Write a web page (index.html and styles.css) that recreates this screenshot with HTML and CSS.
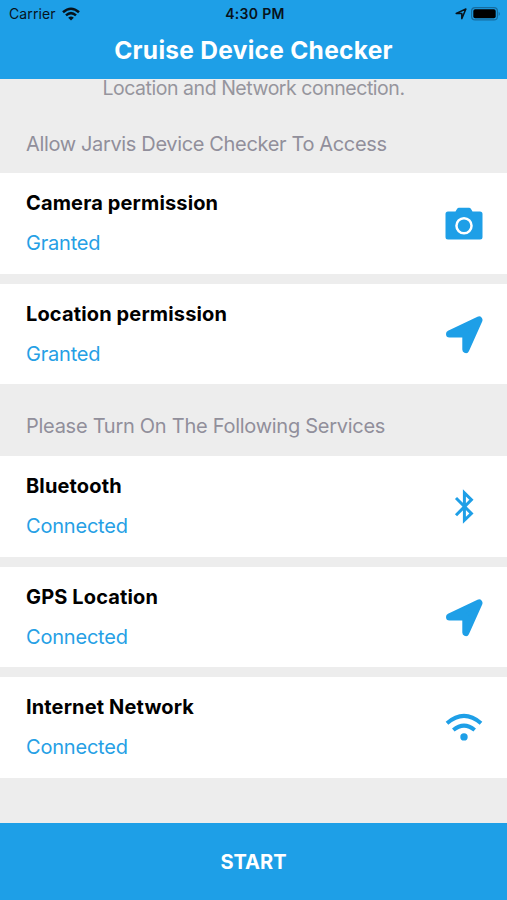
FILE: index.html
```html
<!DOCTYPE html>
<html lang="en">
<head>
<meta charset="utf-8">
<title>Cruise Device Checker</title>
<link rel="stylesheet" href="styles.css">
</head>
<body>
<svg class="defs" width="0" height="0" aria-hidden="true">
  <symbol id="arrow" viewBox="0 0 38 38"><path d="M34 4L20.800 33.500V18H4.500Z" fill="currentColor" stroke="currentColor" stroke-width="7" stroke-linejoin="round"/></symbol>
</svg>
<header class="header">
  <div class="status-bar">
    <div class="carrier"><span class="carrier-name">Carrier</span>
      <svg width="18" height="14" viewBox="0 0 18 14" fill="none" stroke="#07131b" stroke-width="2.500"><path d="M1 5.300Q9-1.900 17 5.300M4 8.400Q9 3.900 14 8.400"/><path d="M6.200 10.700Q9 8.300 11.800 10.700L9 13.500Z" fill="#07131b" stroke="none"/></svg>
    </div>
    <div class="clock">4:30 PM</div>
    <div class="indicators">
      <svg width="12" height="12" viewBox="0 0 12 12" fill="none" stroke="#07131b" stroke-width="1.500" stroke-linejoin="round"><path d="M10.900 1L6.800 10.600V5.400H1.200Z"/></svg>
      <svg width="30" height="14" viewBox="0 0 30 14"><rect x=".6" y=".6" width="25.800" height="12.300" rx="3.500" fill="none" stroke="#166c9f" stroke-width="1.200"/><rect x="2.300" y="2.300" width="22.400" height="8.900" rx="1.800" fill="#000"/><path d="M27.700 4.700Q30 6.800 27.700 9Z" fill="#166c9f"/></svg>
    </div>
  </div>
  <h1 class="title"><span>Cruise Device Checker</span></h1>
</header>
<main class="content">
  <p class="intro"><span>Location and Network connection.</span></p>
  <h2 class="section-title access"><span>Allow Jarvis Device Checker To Access</span></h2>
  <div class="list">
    <div class="row"><div><div class="name">Camera permission</div><div class="state">Granted</div></div>
      <svg class="icon" viewBox="0 0 38 38"><path fill="currentColor" fill-rule="evenodd" d="M3 6.500H10.500L12 4Q12.700 2.800 14 2.800H24Q25.300 2.800 26 4L27.500 6.500H35Q37.500 6.500 37.500 9V32Q37.500 34.500 35 34.500H3Q.5 34.500 .5 32V9Q.5 6.500 3 6.500ZM19 12A8.800 8.800 0 1 0 19 29.600A8.800 8.800 0 1 0 19 12ZM19 14.500A6.300 6.300 0 1 1 19 27.100A6.300 6.300 0 1 1 19 14.500Z"/></svg></div>
    <div class="row"><div><div class="name">Location permission</div><div class="state">Granted</div></div><svg class="icon"><use href="#arrow"/></svg></div>
  </div>
  <h2 class="section-title services"><span>Please Turn On The Following Services</span></h2>
  <div class="list">
    <div class="row"><div><div class="name">Bluetooth</div><div class="state">Connected</div></div>
      <svg class="icon" viewBox="0 0 38 38" fill="none" stroke="currentColor" stroke-width="3"><path d="M11 10L26.400 25.500L19.400 32.300V4.900L26.400 11.700L11 27.200"/></svg></div>
    <div class="row"><div><div class="name">GPS Location</div><div class="state">Connected</div></div><svg class="icon"><use href="#arrow"/></svg></div>
    <div class="row"><div><div class="name">Internet Network</div><div class="state">Connected</div></div>
      <svg class="icon" viewBox="0 0 38 38" fill="none" stroke="currentColor" stroke-width="4"><path d="M2 14.300Q19-.4 36 14.300M8.300 21Q19 12.200 29.700 21"/><circle cx="19" cy="27.900" r="3.700" fill="currentColor" stroke="none"/></svg></div>
  </div>
</main>
<button class="start"><span>START</span></button>
</body>
</html>
```
FILE: styles.css
```css
* { box-sizing: border-box; }
body { margin: 0; width: 507px; height: 900px; overflow: hidden; display: flex; flex-direction: column; background: #ededed; font-family: Inter, "Liberation Sans", sans-serif; color: #000; }
.defs { position: absolute; }
.header { height: 79px; flex: none; background: #1e9fe7; }
.status-bar { height: 27px; padding: 0 6px 0 9px; display: grid; grid-template-columns: 1fr auto 1fr; align-items: center; color: #07131b; font-size: 14px; line-height: 27px; }
.carrier-name { letter-spacing: .1px; }
.carrier { display: flex; align-items: center; gap: 6px; }
.clock { font-weight: 600; letter-spacing: .3px; }
.indicators { display: flex; justify-content: flex-end; align-items: center; gap: 4px; }
.title { margin: 0; height: 48px; line-height: 47px; text-align: center; font-size: 24.500px; font-weight: 700; letter-spacing: .28px; color: #fff; }
.content { flex: 1; min-height: 0; overflow: hidden; }
.intro { margin: -6px 0 0; height: 30px; line-height: 30px; text-align: center; font-size: 19.500px; letter-spacing: -.46px; color: #96959d; }
.section-title { margin: 0; padding: 0 26px; font-size: 20px; font-weight: 400; letter-spacing: -.35px; color: #918f9b; }
.services { letter-spacing: -.27px; }
.access { height: 70.400px; padding-top: 26px; line-height: 30px; }
.services { height: 72px; padding-top: 27px; line-height: 30px; }
.list { display: flex; flex-direction: column; gap: 9.600px; }
.row { height: 100.700px; padding: 10px 24px 0 26px; display: flex; justify-content: space-between; background: #fff; }
.name, .state { height: 40px; line-height: 40px; font-size: 20px; }
.name { font-weight: 700; letter-spacing: .14px; }
.state { letter-spacing: -.2px; color: #269fe5; }
.icon { width: 38px; height: 38px; margin-top: 22px; color: #1e9fe7; }
.start { height: 77px; flex: none; border: 0; padding: 0; background: #1e9fe7; color: #fff; font: 700 20px/78px Inter, "Liberation Sans", sans-serif; }
```
